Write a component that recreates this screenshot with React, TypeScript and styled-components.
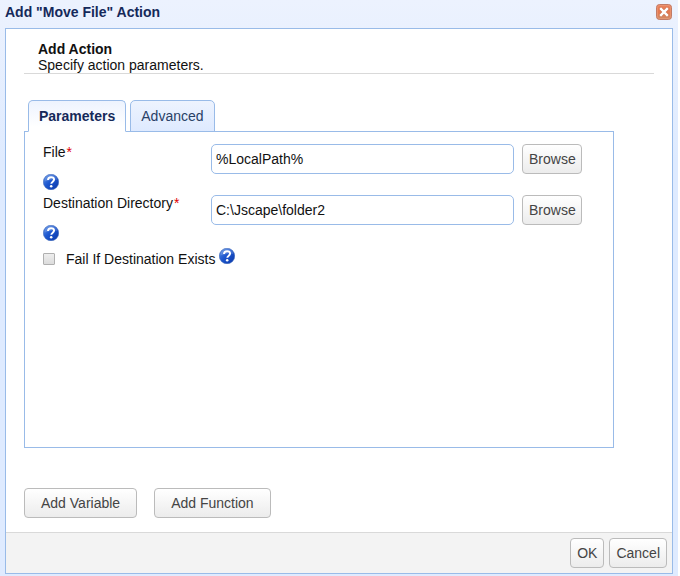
import React, { useState } from "react";
import styled, { createGlobalStyle } from "styled-components";

const GlobalStyle = createGlobalStyle`
  * { box-sizing: border-box; }
  body {
    margin: 0;
    background: #fff;
    color: #111;
    font: 14px/16px "Liberation Sans", Arial, sans-serif;
  }
`;

const Dialog = styled.section`
  display: flex;
  flex-direction: column;
  min-height: 100vh;
  margin-right: 2px;
  padding: 0 5px 2px;
  background: linear-gradient(#ecf2fe, #dfebff 160px);
`;

const TitleBar = styled.header`
  display: flex;
  align-items: flex-start;
  justify-content: space-between;
  height: 28px;
  padding-top: 4px;
`;

const Title = styled.h1`
  margin: 0;
  color: #15295a;
  font-size: 14px;
  line-height: 16px;
`;

const CloseButton = styled.button`
  display: block;
  width: 16px;
  height: 16px;
  margin-right: 1px;
  padding: 0;
  border: 0;
  background: none;
`;

const Panel = styled.div`
  display: flex;
  flex: 1;
  flex-direction: column;
  border: 1px solid #99bbe8;
  background: #fff;
`;

const Body = styled.main`
  flex: 1;
  padding: 12px 18px 14px;
`;

const Intro = styled.div`
  padding: 0 14px;
  border-bottom: 1px solid #d9d9d9;
`;

const Heading = styled.h2`
  margin: 0;
  font-size: 14px;
  line-height: 16px;
`;

const Hint = styled.p`
  margin: 0;
`;

const Tabs = styled.div`
  display: flex;
  gap: 4px;
  margin-top: 26px;
  padding-left: 4px;
`;

const Tab = styled.button<{ $active: boolean }>`
  position: relative;
  z-index: 1;
  height: 32px;
  margin-bottom: -1px;
  padding: 0 10px;
  border: 1px solid #99bbe8;
  border-bottom-color: ${(p) => (p.$active ? "#fff" : "#99bbe8")};
  border-radius: 5px 5px 0 0;
  background: ${(p) =>
    p.$active ? "linear-gradient(#edf3fe, #fff 26px)" : "linear-gradient(#edf3fe, #deeaff)"};
  color: ${(p) => (p.$active ? "#15295a" : "#294166")};
  font: inherit;
  font-weight: ${(p) => (p.$active ? 700 : 400)};
`;

const TabPanel = styled.div`
  min-height: 317px;
  margin-right: 40px;
  padding: 12px 31px 12px 18px;
  border: 1px solid #99bbe8;
`;

const Field = styled.div`
  display: grid;
  grid-template-columns: 160px 1fr 60px;
  align-items: start;
  column-gap: 8px;
  margin-bottom: 5px;
`;

const LabelCell = styled.div`
  display: flex;
  flex-direction: column;
  align-items: flex-start;
  gap: 14px;
`;

const Required = styled.span`
  margin-left: 1px;
  color: #e00000;
`;

const TextInput = styled.input`
  width: 100%;
  min-width: 0;
  height: 30px;
  padding: 0 4px;
  border: 1px solid #99bbe8;
  border-radius: 5px;
  background: #fff;
  color: #111;
  font: inherit;
`;

const Button = styled.button<{ $wide?: boolean }>`
  height: 30px;
  padding: 0 ${(p) => (p.$wide ? 16 : 6)}px;
  border: 1px solid #bbb;
  border-radius: 4px;
  background: linear-gradient(#fff, #ececec);
  color: #444;
  font: inherit;
  white-space: nowrap;
`;

const HelpButton = styled.button`
  display: block;
  width: 16px;
  height: 16px;
  padding: 0;
  border: 0;
  background: none;
`;

const CheckRow = styled.div`
  display: flex;
  align-items: flex-start;
  padding-top: 2px;
`;

const CheckLabel = styled.label`
  display: flex;
  align-items: center;
  gap: 11px;
  margin: 3px 4px 0 0;
`;

const CheckBox = styled.input`
  width: 12px;
  height: 12px;
  margin: 0;
  appearance: none;
  border: 1px solid #b0b0b0;
  border-radius: 1px;
  background: linear-gradient(#eee, #dcdcdc);

  &:checked {
    background: #4a6fae;
  }
`;

const Actions = styled.div`
  display: flex;
  gap: 17px;
  margin-top: 40px;
`;

const Footer = styled.footer`
  display: flex;
  justify-content: flex-end;
  gap: 5px;
  padding: 5px;
  border-top: 1px solid #d9d9d9;
  background: #f3f3f3;
`;

function Help({ about }: { about: string }) {
  const id = "help-" + about.replace(/\W/g, "");
  return (
    <HelpButton type="button" aria-label={`Help: ${about}`}>
      <svg width="16" height="16" viewBox="0 0 16 16" display="block" aria-hidden="true">
        <defs>
          <linearGradient id={id} x1="0" y1="0" x2="1" y2="1">
            <stop offset="0" stopColor="#5f93e6" />
            <stop offset=".45" stopColor="#1d57cf" />
            <stop offset="1" stopColor="#0a37a8" />
          </linearGradient>
        </defs>
        <circle cx="8" cy="8" r="7.7" fill={`url(#${id})`} stroke="#3a66b8" strokeWidth=".6" />
        <path d="M1.6 7.5a6.4 6.4 0 0 1 12.8-1.6Q8 5 1.6 7.5Z" fill="#fff" opacity=".16" />
        <path
          d="M5 6.1C5 4.2 6.2 3.2 8.1 3.2c1.8 0 3 .9 3 2.4 0 2-2.8 2.1-2.8 4.2"
          fill="none"
          stroke="#fff"
          strokeWidth="1.9"
        />
        <circle cx="8.2" cy="12.3" r="1.25" fill="#fff" />
      </svg>
    </HelpButton>
  );
}

function CloseIcon() {
  return (
    <svg width="16" height="16" viewBox="0 0 16 16" display="block" aria-hidden="true">
      <defs>
        <linearGradient id="close-fill" x1="0" y1="0" x2="0" y2="1">
          <stop offset="0" stopColor="#e8835f" />
          <stop offset=".5" stopColor="#e5784f" />
          <stop offset="1" stopColor="#cf8d67" />
        </linearGradient>
      </defs>
      <rect x=".5" y=".5" width="15" height="15" rx="3" fill="url(#close-fill)" stroke="#c17b66" />
      <rect x="1.5" y="1.5" width="13" height="13" rx="2" fill="none" stroke="#efa383" opacity=".5" />
      <path d="m4 4 8 8M12 4l-8 8" stroke="#a96850" strokeWidth="3.6" opacity=".4" />
      <path d="m4.2 4.2 7.6 7.6M11.8 4.2l-7.6 7.6" stroke="#fff" strokeWidth="2.4" />
    </svg>
  );
}

function PathField({ id, label, initial }: { id: string; label: string; initial: string }) {
  const [value, setValue] = useState(initial);
  return (
    <Field>
      <LabelCell>
        <label htmlFor={id}>
          {label}
          <Required>*</Required>
        </label>
        <Help about={label} />
      </LabelCell>
      <TextInput id={id} type="text" required value={value} onChange={(e) => setValue(e.target.value)} />
      <Button type="button">Browse</Button>
    </Field>
  );
}

export default function App() {
  const [tab, setTab] = useState("Parameters");
  return (
    <>
      <GlobalStyle />
      <Dialog role="dialog" aria-labelledby="dialog-title">
        <TitleBar>
          <Title id="dialog-title">Add "Move File" Action</Title>
          <CloseButton type="button" aria-label="Close">
            <CloseIcon />
          </CloseButton>
        </TitleBar>
        <Panel>
          <Body>
            <Intro>
              <Heading>Add Action</Heading>
              <Hint>Specify action parameters.</Hint>
            </Intro>
            <Tabs role="tablist">
              {["Parameters", "Advanced"].map((name) => (
                <Tab
                  key={name}
                  type="button"
                  role="tab"
                  aria-selected={tab === name}
                  $active={tab === name}
                  onClick={() => setTab(name)}
                >
                  {name}
                </Tab>
              ))}
            </Tabs>
            <TabPanel role="tabpanel" aria-label={tab}>
              {tab === "Parameters" && (
                <>
                  <PathField id="file" label="File" initial="%LocalPath%" />
                  <PathField id="destination" label="Destination Directory" initial="C:\Jscape\folder2" />
                  <CheckRow>
                    <CheckLabel>
                      <CheckBox type="checkbox" />
                      Fail If Destination Exists
                    </CheckLabel>
                    <Help about="Fail If Destination Exists" />
                  </CheckRow>
                </>
              )}
            </TabPanel>
            <Actions>
              <Button type="button" $wide>Add Variable</Button>
              <Button type="button" $wide>Add Function</Button>
            </Actions>
          </Body>
          <Footer>
            <Button type="button">OK</Button>
            <Button type="button">Cancel</Button>
          </Footer>
        </Panel>
      </Dialog>
    </>
  );
}
